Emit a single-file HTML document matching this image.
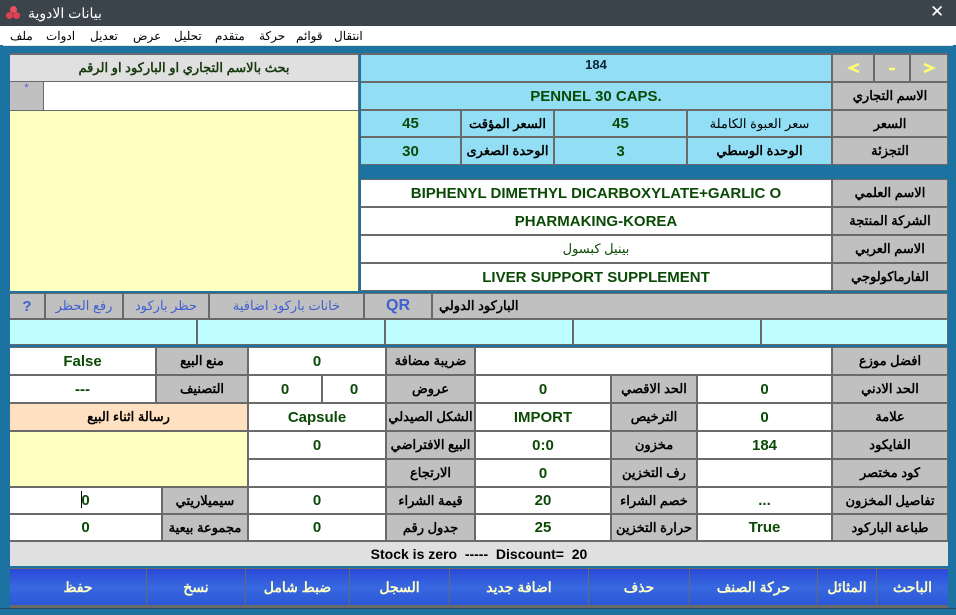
<!DOCTYPE html>
<html dir="ltr"><head><meta charset="utf-8"><style>
*{margin:0;padding:0}
body{width:956px;height:614px;position:relative;overflow:hidden;background:#1c72a0;font-family:"Liberation Sans","Noto Sans CJK SC",sans-serif;direction:ltr}
.a{position:absolute}
.m{position:absolute;top:29px;font-size:12px;color:#000;white-space:nowrap}
.c{position:absolute;box-sizing:border-box;display:flex;align-items:center;justify-content:center;white-space:nowrap}
.g{background:#c0c0c0;font-weight:bold;font-size:13px;color:#000}
.w{background:#fff}
.b{background:#92dff5}
.v{font-weight:bold;font-size:15px;color:#0b4a06}
.btn{background:linear-gradient(180deg,#2a48d8 0%,#3868e0 50%,#2c58d8 100%);color:#ffffc8;font-weight:bold;font-size:14px}
</style></head><body>
<div class="a" style="left:0;top:0;width:956px;height:26px;background:#3c444b"></div>
<div class="a" style="left:6px;top:12px;width:7px;height:7px;border-radius:50%;background:#e04050"></div>
<div class="a" style="left:13px;top:12px;width:7px;height:7px;border-radius:50%;background:#e04050"></div>
<div class="a" style="left:9.5px;top:6px;width:7px;height:7px;border-radius:50%;background:#e85060"></div>
<div class="a" style="left:28px;top:5px;color:#fff;font-size:14px">بيانات الادوية</div>
<div class="a" style="left:930px;top:2px;color:#fff;font-size:17px">✕</div>
<div class="a" style="left:0;top:26px;width:956px;height:19px;background:#fff"></div>
<span class="m" style="left:10px">ملف</span>
<span class="m" style="left:46px">ادوات</span>
<span class="m" style="left:90px">تعديل</span>
<span class="m" style="left:133px">عرض</span>
<span class="m" style="left:174px">تحليل</span>
<span class="m" style="left:215px">متقدم</span>
<span class="m" style="left:259px">حركة</span>
<span class="m" style="left:296px">قوائم</span>
<span class="m" style="left:334px">انتقال</span>
<div class="a" style="left:3px;top:45px;width:950px;height:1px;background:#e8e8e8"></div>
<div class="a" style="left:10px;top:53px;width:938px;height:555px;background:#6a6a6a"></div>
<div class="a" style="left:359px;top:53px;width:2px;height:238px;background:#1c72a0"></div>

<div class="c" style="left:10px;top:55px;width:348px;height:26px;background:#e0e0e0;font-weight:bold;font-size:13px;color:#1a3a10">بحث بالاسم التجاري او الباركود او الرقم</div>
<div class="c" style="left:10px;top:82px;width:33px;height:28px;background:#c0c0c0;color:#5060d0;font-size:11px;align-items:flex-start">*</div>
<div class="c w" style="left:44px;top:82px;width:314px;height:28px"></div>
<div class="c" style="left:10px;top:111px;width:348px;height:180px;background:#ffffc0"></div>

<div class="c b" style="left:361px;top:55px;width:470px;height:26px;font-size:13px;font-weight:bold;color:#123;align-items:flex-start;padding-top:2px">184</div>
<div class="c g" style="left:833px;top:55px;width:114px;height:26px"></div>
<div class="c" style="left:835px;top:55px;width:40px;height:26px;border-right:2px solid #6a6a6a"><svg width="14" height="12"><path d="M12 2 L3 6 L12 10" stroke="#ffff70" stroke-width="2.4" fill="none"/></svg></div>
<div class="c" style="left:875px;top:55px;width:36px;height:26px;border-right:2px solid #6a6a6a"><svg width="10" height="12"><path d="M2 7 H8" stroke="#ffff70" stroke-width="2.4"/></svg></div>
<div class="c" style="left:911px;top:55px;width:36px;height:26px"><svg width="14" height="12"><path d="M2 2 L11 6 L2 10" stroke="#ffff70" stroke-width="2.4" fill="none"/></svg></div>

<div class="c g" style="left:833px;top:83px;width:114px;height:26px">الاسم التجاري</div>
<div class="c b v" style="left:361px;top:83px;width:470px;height:26px">PENNEL 30 CAPS.</div>

<div class="c g" style="left:833px;top:111px;width:114px;height:25px">السعر</div>
<div class="c b" style="left:688px;top:111px;width:143px;height:25px;font-size:13px">سعر العبوة الكاملة</div>
<div class="c b v" style="left:555px;top:111px;width:131px;height:25px">45</div>
<div class="c b" style="left:462px;top:111px;width:91px;height:25px;font-size:13px;font-weight:bold">السعر المؤقت</div>
<div class="c b v" style="left:361px;top:111px;width:99px;height:25px">45</div>

<div class="c g" style="left:833px;top:138px;width:114px;height:26px">التجزئة</div>
<div class="c b" style="left:688px;top:138px;width:143px;height:26px;font-size:13px;font-weight:bold">الوحدة الوسطي</div>
<div class="c b v" style="left:555px;top:138px;width:131px;height:26px">3</div>
<div class="c b" style="left:462px;top:138px;width:91px;height:26px;font-size:13px;font-weight:bold">الوحدة الصغرى</div>
<div class="c b v" style="left:361px;top:138px;width:99px;height:26px">30</div>

<div class="a" style="left:361px;top:165px;width:587px;height:14px;background:#1c72a0"></div>

<div class="c g" style="left:833px;top:180px;width:114px;height:26px">الاسم العلمي</div>
<div class="c w v" style="left:361px;top:180px;width:470px;height:26px">BIPHENYL DIMETHYL DICARBOXYLATE+GARLIC O</div>
<div class="c g" style="left:833px;top:208px;width:114px;height:26px">الشركة المنتجة</div>
<div class="c w v" style="left:361px;top:208px;width:470px;height:26px">PHARMAKING-KOREA</div>
<div class="c g" style="left:833px;top:236px;width:114px;height:26px">الاسم العربي</div>
<div class="c w" style="left:361px;top:236px;width:470px;height:26px;font-size:13px;color:#0b4a06">بينيل كبسول</div>
<div class="c g" style="left:833px;top:264px;width:114px;height:26px">الفارماكولوجي</div>
<div class="c w v" style="left:361px;top:264px;width:470px;height:26px">LIVER SUPPORT SUPPLEMENT</div>

<div class="a" style="left:10px;top:291px;width:938px;height:2px;background:#1c72a0"></div>
<div class="c g" style="left:10px;top:294px;width:34px;height:24px;color:#4060d0;font-size:15px">?</div>
<div class="c g" style="left:46px;top:294px;width:76px;height:24px;color:#4060d0;font-weight:normal">رفع الحظر</div>
<div class="c g" style="left:124px;top:294px;width:84px;height:24px;color:#4060d0;font-weight:normal">حظر باركود</div>
<div class="c g" style="left:210px;top:294px;width:153px;height:24px;color:#4060d0;font-weight:normal">خانات باركود اضافية</div>
<div class="c g" style="left:365px;top:294px;width:66px;height:24px;color:#4060d0;font-size:16px">QR</div>
<div class="c g" style="left:433px;top:294px;width:514px;height:24px;justify-content:flex-start;padding-left:6px">الباركود الدولي</div>
<div class="c" style="left:10px;top:320px;width:186px;height:24px;background:#c0ffff"></div>
<div class="c" style="left:198px;top:320px;width:186px;height:24px;background:#c0ffff"></div>
<div class="c" style="left:386px;top:320px;width:186px;height:24px;background:#c0ffff"></div>
<div class="c" style="left:574px;top:320px;width:186px;height:24px;background:#c0ffff"></div>
<div class="c" style="left:762px;top:320px;width:185px;height:24px;background:#c0ffff"></div>
<div class="a" style="left:10px;top:345px;width:938px;height:2px;background:#1c72a0"></div>

<div class="c g" style="left:833px;top:348px;width:114px;height:26px">افضل موزع</div>
<div class="c w" style="left:476px;top:348px;width:355px;height:26px"></div>
<div class="c g" style="left:387px;top:348px;width:87px;height:26px">ضريبة مضافة</div>
<div class="c w v" style="left:249px;top:348px;width:136px;height:26px">0</div>
<div class="c g" style="left:157px;top:348px;width:90px;height:26px">منع البيع</div>
<div class="c w v" style="left:10px;top:348px;width:145px;height:26px">False</div>

<div class="c g" style="left:833px;top:376px;width:114px;height:26px">الحد الادني</div>
<div class="c w v" style="left:698px;top:376px;width:133px;height:26px">0</div>
<div class="c g" style="left:612px;top:376px;width:84px;height:26px">الحد الاقصي</div>
<div class="c w v" style="left:476px;top:376px;width:134px;height:26px">0</div>
<div class="c g" style="left:387px;top:376px;width:87px;height:26px">عروض</div>
<div class="c w v" style="left:323px;top:376px;width:62px;height:26px">0</div>
<div class="c w v" style="left:249px;top:376px;width:72px;height:26px">0</div>
<div class="c g" style="left:157px;top:376px;width:90px;height:26px">التصنيف</div>
<div class="c w v" style="left:10px;top:376px;width:145px;height:26px">---</div>

<div class="c g" style="left:833px;top:404px;width:114px;height:26px">علامة</div>
<div class="c w v" style="left:698px;top:404px;width:133px;height:26px">0</div>
<div class="c g" style="left:612px;top:404px;width:84px;height:26px">الترخيص</div>
<div class="c w v" style="left:476px;top:404px;width:134px;height:26px">IMPORT</div>
<div class="c g" style="left:387px;top:404px;width:87px;height:26px">الشكل الصيدلي</div>
<div class="c w v" style="left:249px;top:404px;width:136px;height:26px">Capsule</div>
<div class="c" style="left:10px;top:404px;width:237px;height:26px;background:#ffe0c0;font-weight:bold;font-size:13px">رسالة اثناء البيع</div>

<div class="c g" style="left:833px;top:432px;width:114px;height:26px">الفايكود</div>
<div class="c w v" style="left:698px;top:432px;width:133px;height:26px">184</div>
<div class="c g" style="left:612px;top:432px;width:84px;height:26px">مخزون</div>
<div class="c w v" style="left:476px;top:432px;width:134px;height:26px">0:0</div>
<div class="c g" style="left:387px;top:432px;width:87px;height:26px">البيع الافتراضي</div>
<div class="c w v" style="left:249px;top:432px;width:136px;height:26px">0</div>
<div class="c" style="left:10px;top:432px;width:237px;height:54px;background:#ffffc0"></div>

<div class="c g" style="left:833px;top:460px;width:114px;height:26px">كود مختصر</div>
<div class="c w" style="left:698px;top:460px;width:133px;height:26px"></div>
<div class="c g" style="left:612px;top:460px;width:84px;height:26px">رف التخزين</div>
<div class="c w v" style="left:476px;top:460px;width:134px;height:26px">0</div>
<div class="c g" style="left:387px;top:460px;width:87px;height:26px">الارتجاع</div>
<div class="c w" style="left:249px;top:460px;width:136px;height:26px"></div>

<div class="c g" style="left:833px;top:488px;width:114px;height:25px">تفاصيل المخزون</div>
<div class="c w v" style="left:698px;top:488px;width:133px;height:25px">...</div>
<div class="c g" style="left:612px;top:488px;width:84px;height:25px">خصم الشراء</div>
<div class="c w v" style="left:476px;top:488px;width:134px;height:25px">20</div>
<div class="c g" style="left:387px;top:488px;width:87px;height:25px">قيمة الشراء</div>
<div class="c w v" style="left:249px;top:488px;width:136px;height:25px">0</div>
<div class="c g" style="left:163px;top:488px;width:84px;height:25px">سيميلاريتي</div>
<div class="c w v" style="left:10px;top:488px;width:151px;height:25px">0</div>
<div class="a" style="left:81px;top:491px;width:1px;height:17px;background:#000"></div>

<div class="c g" style="left:833px;top:515px;width:114px;height:25px">طباعة الباركود</div>
<div class="c w v" style="left:698px;top:515px;width:133px;height:25px">True</div>
<div class="c g" style="left:612px;top:515px;width:84px;height:25px">حرارة التخزين</div>
<div class="c w v" style="left:476px;top:515px;width:134px;height:25px">25</div>
<div class="c g" style="left:387px;top:515px;width:87px;height:25px">جدول رقم</div>
<div class="c w v" style="left:249px;top:515px;width:136px;height:25px">0</div>
<div class="c g" style="left:163px;top:515px;width:84px;height:25px">مجموعة بيعية</div>
<div class="c w v" style="left:10px;top:515px;width:151px;height:25px">0</div>

<div class="c" style="left:10px;top:542px;width:938px;height:24px;background:#e0e0e0;font-weight:bold;font-size:14px;color:#000;white-space:pre">Stock is zero  -----  Discount=  20</div>
<div class="a" style="left:10px;top:566px;width:938px;height:2px;background:#1c72a0"></div>

<div class="c btn" style="left:10px;top:569px;width:136px;height:36px">حفظ</div>
<div class="c btn" style="left:147px;top:569px;width:98px;height:36px">نسخ</div>
<div class="c btn" style="left:246px;top:569px;width:103px;height:36px">ضبط شامل</div>
<div class="c btn" style="left:350px;top:569px;width:99px;height:36px">السجل</div>
<div class="c btn" style="left:450px;top:569px;width:138px;height:36px">اضافة جديد</div>
<div class="c btn" style="left:589px;top:569px;width:100px;height:36px">حذف</div>
<div class="c btn" style="left:690px;top:569px;width:127px;height:36px">حركة الصنف</div>
<div class="c btn" style="left:818px;top:569px;width:58px;height:36px">المثائل</div>
<div class="c btn" style="left:877px;top:569px;width:71px;height:36px">الباحث</div>
<div class="a" style="left:0;top:608px;width:956px;height:6px;background:#1c72a0;border-top:1px solid #2a4a60"></div>
</body></html>
